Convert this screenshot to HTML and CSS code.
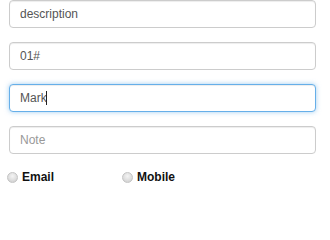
FILE: index.html
```html
<!DOCTYPE html>
<html>
<head>
<meta charset="utf-8">
<link rel="stylesheet" href="styles.css">
</head>
<body>
<form class="form">
  <input class="field" type="text" placeholder="description" value="description">
  <input class="field" type="text" value="01#">
  <div class="field-wrap">
    <input class="field field-focus" type="text" value="Mark">
    <span class="caret"></span>
  </div>
  <input class="field" type="text" placeholder="Note">
  <div class="choices">
    <label class="choice"><input class="radio" type="radio" name="contact"><span>Email</span></label>
    <label class="choice"><input class="radio" type="radio" name="contact"><span>Mobile</span></label>
  </div>
</form>
</body>
</html>
```

FILE: styles.css
```css
html, body {
  margin: 0;
  padding: 0;
  background: #ffffff;
}

body {
  font-family: "Liberation Sans", Arial, sans-serif;
  font-size: 12px;
  color: #555555;
}

.form {
  display: flex;
  flex-direction: column;
  gap: 14px;
  padding: 0 14px 0 9px;
  width: 307px;
}

.field-wrap {
  position: relative;
  height: 28px;
}

.field {
  box-sizing: border-box;
  width: 307px;
  height: 28px;
  margin: 0;
  padding: 0 10px;
  border: 1px solid #cccccc;
  border-radius: 4px;
  font-family: "Liberation Sans", Arial, sans-serif;
  font-size: 12px;
  color: #555555;
  background: #ffffff;
  box-shadow: inset 0 1px 1px rgba(0, 0, 0, 0.075);
  outline: none;
}

.field::placeholder {
  color: #999999;
}

.field-focus {
  border-color: #66afe9;
  box-shadow: inset 0 1px 1px rgba(0, 0, 0, 0.075), 0 0 5px rgba(102, 175, 233, 0.6);
}

.caret {
  position: absolute;
  left: 37px;
  top: 7px;
  width: 1px;
  height: 14px;
  background: #222222;
}

.choices {
  display: grid;
  grid-template-columns: 115px 115px;
  margin-left: -2px;
  margin-top: 2px;
}

.choice {
  display: flex;
  align-items: center;
  gap: 4px;
  font-weight: bold;
  font-size: 12px;
  color: #111111;
}

.radio {
  -webkit-appearance: none;
  appearance: none;
  box-sizing: border-box;
  width: 11px;
  height: 11px;
  margin: 0;
  border-radius: 50%;
  border: 1px solid #c4c4c4;
  background: radial-gradient(circle at 50% 35%, #f4f4f4 0%, #dcdcdc 60%, #c9c9c9 100%);
}
```
